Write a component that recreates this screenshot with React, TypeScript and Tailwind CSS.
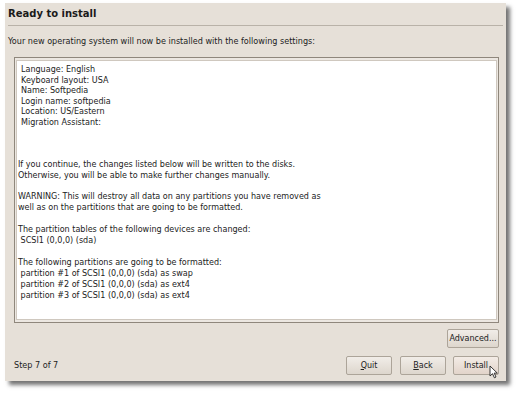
const font = { fontFamily: '"DejaVu Sans", "Liberation Sans", sans-serif' }

const summary = [
  "Language: English",
  "Keyboard layout: USA",
  "Name: Softpedia",
  "Login name: softpedia",
  "Location: US/Eastern",
  "Migration Assistant:",
]

const changes = [
  "If you continue, the changes listed below will be written to the disks.",
  "Otherwise, you will be able to make further changes manually.",
  "",
  "WARNING: This will destroy all data on any partitions you have removed as",
  "well as on the partitions that are going to be formatted.",
  "",
  "The partition tables of the following devices are changed:",
  " SCSI1 (0,0,0) (sda)",
  "",
  "The following partitions are going to be formatted:",
  " partition #1 of SCSI1 (0,0,0) (sda) as swap",
  " partition #2 of SCSI1 (0,0,0) (sda) as ext4",
  " partition #3 of SCSI1 (0,0,0) (sda) as ext4",
]

function Button({ children, className = "" }: { children: React.ReactNode; className?: string }) {
  return (
    <div
      className={`flex items-center justify-center h-[19px] border border-[#aca499] rounded-[2px] bg-gradient-to-b from-[#f1ede8] to-[#ddd6cd] text-[8px] text-[#222] ${className}`}
    >
      {children}
    </div>
  )
}

export default function App() {
  return (
    <div className="w-[518px] h-[394px] bg-white pl-[5px] pt-[3px]" style={font}>
      <div className="relative w-[501px] h-[378px] bg-[#e6e0d8] shadow-[4px_4px_4px_rgba(0,0,0,0.55)] flex flex-col px-[3px]">
        <div className="pt-[4px] pb-[4px] border-b border-[#b9b2a8] text-[10px] font-bold text-[#1a1a1a] leading-[14px]">
          Ready to install
        </div>
        <div className="pt-[10px] text-[8.1px] text-[#222] leading-[10px]">
          Your new operating system will now be installed with the following settings:
        </div>
        <div className="mt-[11px] ml-[6px] mr-[4px] h-[266px] border border-[#8f877c] px-[1px] py-[2px] bg-[#ece7e1]">
          <div className="h-full bg-white border border-[#cfc8bf] pl-[1px] pt-[4px] text-[8.05px] leading-[10.6px] text-[#222] whitespace-pre">
            <div className="pl-[3px]">
              {summary.map((l) => (
                <div key={l}>{l}</div>
              ))}
            </div>
            <div className="h-[31px]" />
            <div>
              {changes.map((l, i) => (
                <div key={i} className="h-[10.95px]">
                  {l}
                </div>
              ))}
            </div>
          </div>
        </div>
        <div className="flex justify-end mt-[6px] pr-[4px]">
          <Button className="w-[52px]">Advanced...</Button>
        </div>
        <div className="flex items-center mt-[8px] pl-[6px] pr-[4px]">
          <div className="text-[8.1px] text-[#222] flex-1">Step 7 of 7</div>
          <Button className="w-[46px] mr-[8px]">
            <span className="underline">Q</span>uit
          </Button>
          <Button className="w-[46px] mr-[7px]">
            <span className="underline">B</span>ack
          </Button>
          <Button className="w-[46px] bg-gradient-to-b from-[#f3ece6] to-[#e2d4ca]">Install</Button>
        </div>
        <svg className="absolute left-[484px] top-[362px]" width="9" height="14" viewBox="0 0 9 14">
          <path d="M1 1 L1 11 L3.5 8.7 L5.4 12.8 L7 12 L5.2 8.1 L8.3 8.1 Z" fill="#fff" stroke="#222" strokeWidth="0.9" strokeLinejoin="round" />
        </svg>
      </div>
    </div>
  )
}
